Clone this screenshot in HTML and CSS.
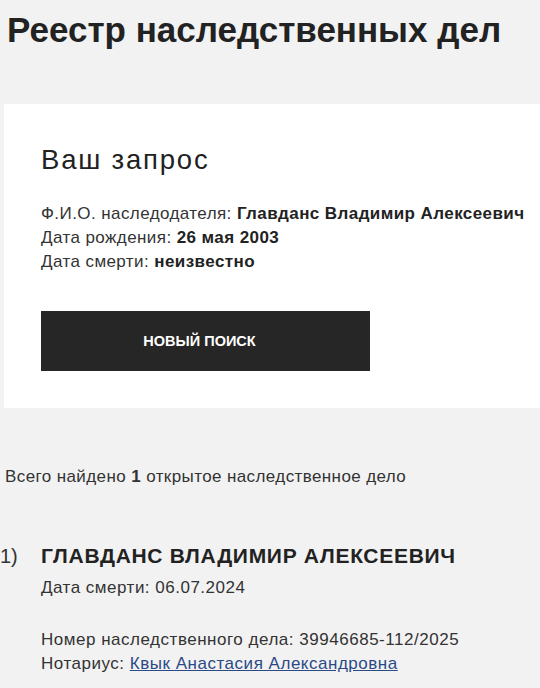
FILE: index.html
```html
<!DOCTYPE html>
<html lang="ru">
<head>
<meta charset="utf-8">
<link rel="stylesheet" href="styles.css">
</head>
<body>
<h1 class="page-title">Реестр наследственных дел</h1>
<section class="request-card">
  <h2 class="card-title">Ваш запрос</h2>
  <div class="info">
    <div>Ф.И.О. наследодателя: <b>Главданс Владимир Алексеевич</b></div>
    <div>Дата рождения: <b>26 мая 2003</b></div>
    <div>Дата смерти: <b>неизвестно</b></div>
  </div>
  <button class="btn">НОВЫЙ ПОИСК</button>
</section>
<p class="summary">Всего найдено <b>1</b> открытое наследственное дело</p>
<div class="case">
  <div class="case-num">1)</div>
  <div class="case-body">
    <div class="case-name">ГЛАВДАНС ВЛАДИМИР АЛЕКСЕЕВИЧ</div>
    <div class="case-line">Дата смерти: 06.07.2024</div>
    <div class="case-details">
      <div>Номер наследственного дела: 39946685-112/2025</div>
      <div>Нотариус: <a href="#" class="link">Квык Анастасия Александровна</a></div>
    </div>
  </div>
</div>
</body>
</html>
```
FILE: styles.css
```css
html, body {
  margin: 0;
  padding: 0;
  background: #f2f2f2;
  font-family: "Liberation Sans", Arial, sans-serif;
  color: #222;
}
body {
  overflow: hidden;
}
.page-title {
  margin: 0;
  padding: 10px 0 0 7px;
  font-size: 35px;
  font-weight: bold;
  line-height: 40px;
  color: #222;
  white-space: nowrap;
}
.request-card {
  margin: 54px 0 0 4px;
  background: #fff;
  padding: 40px 0 37px 37px;
}
.card-title {
  margin: 0;
  font-size: 27.5px;
  font-weight: normal;
  line-height: 32px;
  letter-spacing: 1.8px;
  color: #222;
}
.info {
  margin-top: 26px;
  font-size: 17px;
  line-height: 24px;
  letter-spacing: 0.42px;
  color: #333;
  white-space: nowrap;
}
.info b {
  color: #222;
}
.btn {
  margin-top: 37px;
  width: 329px;
  height: 60px;
  border: 0;
  padding: 0 12px 0 0;
  background: #262626;
  color: #fff;
  font-family: "Liberation Sans", Arial, sans-serif;
  font-weight: bold;
  font-size: 14.5px;
  letter-spacing: 0;
  display: block;
}
.summary {
  margin: 57px 0 0 5px;
  font-size: 17px;
  line-height: 24px;
  letter-spacing: 0.4px;
  color: #333;
}
.case {
  display: flex;
  margin-top: 53px;
}
.case-num {
  width: 41px;
  font-size: 20px;
  line-height: 28px;
  color: #333;
}
.case-body {
  flex: 1;
}
.case-name {
  font-size: 21px;
  font-weight: bold;
  line-height: 28px;
  letter-spacing: 0.7px;
  color: #222;
}
.case-line {
  margin-top: 6px;
  font-size: 17px;
  line-height: 24px;
  letter-spacing: 0.5px;
  color: #333;
}
.case-details {
  margin-top: 28px;
  font-size: 17px;
  line-height: 24px;
  letter-spacing: 0.52px;
  color: #333;
}
.link {
  color: #2b4a85;
  text-decoration: underline;
}
```
